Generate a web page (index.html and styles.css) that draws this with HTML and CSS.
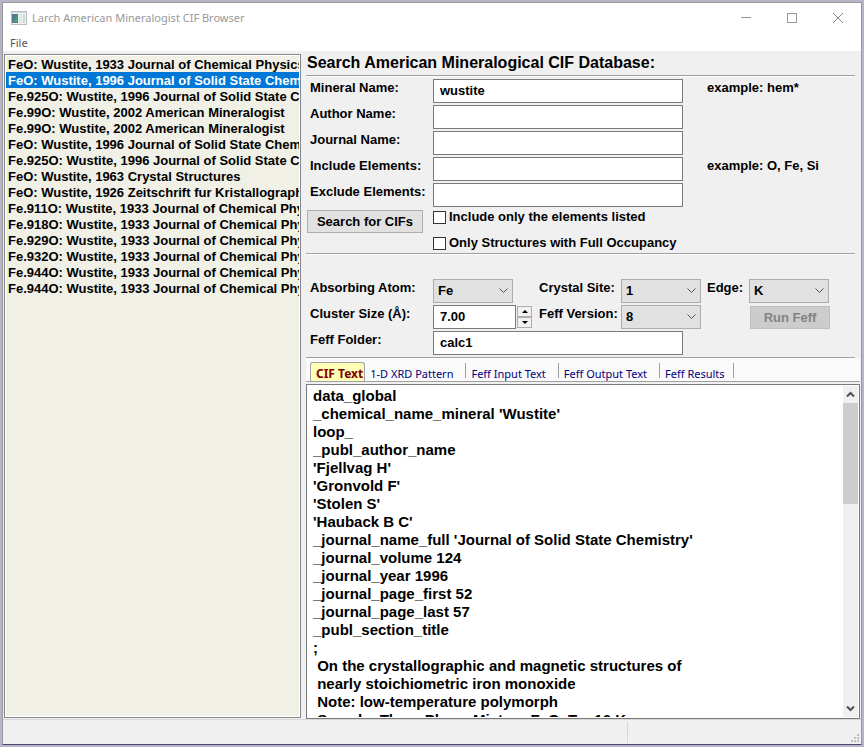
FILE: index.html
```html
<!DOCTYPE html>
<html lang="en">
<head>
<meta charset="utf-8">
<title>Larch American Mineralogist CIF Browser</title>
<link rel="stylesheet" href="styles.css">
</head>
<body>
<div class="window">
  <header class="titlebar">
    <svg class="app-icon" width="16" height="14" viewBox="0 0 16 14" aria-hidden="true">
      <defs><linearGradient id="pane" x1="0" y1="0" x2="1" y2="1"><stop offset="0" stop-color="#4766a0"/><stop offset="1" stop-color="#4fb27a"/></linearGradient></defs>
      <rect x="0.5" y="0.5" width="15" height="13" fill="#f1f3f4" stroke="#b9bdc0"/>
      <rect x="1" y="1" width="14" height="1" fill="#d2d8dc"/>
      <rect x="1" y="3" width="6" height="9" fill="#5d7a80"/>
      <rect x="2" y="4" width="4" height="7" fill="url(#pane)"/>
      <rect x="8" y="3" width="3" height="9" fill="#dde6ea"/>
      <rect x="12" y="3" width="2" height="9" fill="#c6dccf"/>
    </svg>
    <h1 class="title">Larch American Mineralogist CIF Browser</h1>
    <button class="caption" type="button" aria-label="Minimize"><svg width="10" height="10"><path d="M0 4.5H10" stroke="#999"/></svg></button>
    <button class="caption" type="button" aria-label="Maximize"><svg width="10" height="10"><rect x="0.5" y="0.5" width="9" height="9" fill="none" stroke="#999"/></svg></button>
    <button class="caption" type="button" aria-label="Close"><svg width="10" height="10"><path d="M0 0L10 10M10 0L0 10" stroke="#888"/></svg></button>
  </header>
  <nav class="menubar"><button class="menu" type="button">File</button></nav>

  <main class="content">
    <ul class="results">
      <li>FeO: Wustite, 1933 Journal of Chemical Physics</li>
      <li class="selected">FeO: Wustite, 1996 Journal of Solid State Chemistry</li>
      <li>Fe.925O: Wustite, 1996 Journal of Solid State Chemistry</li>
      <li>Fe.99O: Wustite, 2002 American Mineralogist</li>
      <li>Fe.99O: Wustite, 2002 American Mineralogist</li>
      <li>FeO: Wustite, 1996 Journal of Solid State Chemistry</li>
      <li>Fe.925O: Wustite, 1996 Journal of Solid State Chemistry</li>
      <li>FeO: Wustite, 1963 Crystal Structures</li>
      <li>FeO: Wustite, 1926 Zeitschrift fur Kristallographie</li>
      <li>Fe.911O: Wustite, 1933 Journal of Chemical Physics</li>
      <li>Fe.918O: Wustite, 1933 Journal of Chemical Physics</li>
      <li>Fe.929O: Wustite, 1933 Journal of Chemical Physics</li>
      <li>Fe.932O: Wustite, 1933 Journal of Chemical Physics</li>
      <li>Fe.944O: Wustite, 1933 Journal of Chemical Physics</li>
      <li>Fe.944O: Wustite, 1933 Journal of Chemical Physics</li>
    </ul>

    <section class="panel">
      <h2 class="heading">Search American Mineralogical CIF Database:</h2>
      <hr class="rule">
      <form class="form search">
        <label for="mineral">Mineral Name:</label>
        <input class="field wide" id="mineral" type="text" value="wustite">
        <span class="hint">example: hem*</span>
        <label for="author">Author Name:</label>
        <input class="field wide" id="author" type="text">
        <label for="journal">Journal Name:</label>
        <input class="field wide" id="journal" type="text">
        <label for="include">Include Elements:</label>
        <input class="field wide" id="include" type="text">
        <span class="hint">example: O, Fe, Si</span>
        <label for="exclude">Exclude Elements:</label>
        <input class="field wide" id="exclude" type="text">
        <button class="button go" type="button">Search for CIFs</button>
        <label class="check"><input type="checkbox">Include only the elements listed</label>
        <label class="check"><input type="checkbox">Only Structures with Full Occupancy</label>
      </form>
      <hr class="rule">
      <form class="form feff">
        <label for="atom">Absorbing Atom:</label>
        <select class="combo" id="atom"><option>Fe</option></select>
        <label for="site">Crystal Site:</label>
        <select class="combo" id="site"><option>1</option></select>
        <label for="edge">Edge:</label>
        <select class="combo" id="edge"><option>K</option></select>
        <label for="size">Cluster Size (Å):</label>
        <div class="spin">
          <input class="field" id="size" type="text" value="7.00">
          <div class="steps">
            <button type="button" aria-label="Increase"><svg width="6" height="3"><path d="M0 3L3 0L6 3Z"/></svg></button>
            <button type="button" aria-label="Decrease"><svg width="6" height="3"><path d="M0 0L3 3L6 0Z"/></svg></button>
          </div>
        </div>
        <label for="version">Feff Version:</label>
        <select class="combo" id="version"><option>8</option></select>
        <button class="button run" type="button" disabled>Run Feff</button>
        <label for="folder">Feff Folder:</label>
        <input class="field wide" id="folder" type="text" value="calc1">
      </form>
      <hr class="rule">
      <div class="tabs" role="tablist">
        <button class="tab active" type="button" role="tab" aria-selected="true">CIF Text</button>
        <button class="tab" type="button" role="tab">1-D XRD Pattern</button>
        <button class="tab" type="button" role="tab">Feff Input Text</button>
        <button class="tab" type="button" role="tab">Feff Output Text</button>
        <button class="tab" type="button" role="tab">Feff Results</button>
      </div>
      <div class="viewer">
        <textarea class="cif" aria-label="CIF Text" readonly>data_global
_chemical_name_mineral 'Wustite'
loop_
_publ_author_name
'Fjellvag H'
'Gronvold F'
'Stolen S'
'Hauback B C'
_journal_name_full 'Journal of Solid State Chemistry'
_journal_volume 124
_journal_year 1996
_journal_page_first 52
_journal_page_last 57
_publ_section_title
;
 On the crystallographic and magnetic structures of
 nearly stoichiometric iron monoxide
 Note: low-temperature polymorph
 Sample: Three Phase Mixture FeO, T = 10 K</textarea>
        <div class="scrollbar" aria-hidden="true">
          <svg width="15" height="17"><path d="M4 10.500L7.500 7L11 10.500" fill="none" stroke="#505050" stroke-width="2"/></svg>
          <div class="track"><div class="thumb"></div></div>
          <svg width="15" height="17"><path d="M4 6.500L7.500 10L11 6.500" fill="none" stroke="#505050" stroke-width="2"/></svg>
        </div>
      </div>
    </section>
  </main>

  <footer class="statusbar">
    <span class="status-main"></span>
    <span class="status-side"></span>
    <svg class="grip" width="8" height="8" fill="#bfbfbf" aria-hidden="true"><path d="M6 0h2v2h-2zM3 3h2v2h-2zM6 3h2v2h-2zM0 6h2v2h-2zM3 6h2v2h-2zM6 6h2v2h-2z"/></svg>
  </footer>
</div>
</body>
</html>
```
FILE: styles.css
```css
* {
  box-sizing: border-box;
}

body {
  margin: 0;
  height: 100vh;
  padding: 2px;
  background: #b8b4c8;
  color: #000;
  font: bold 13px/16px "Liberation Sans", Arial, sans-serif;
}

button,
input,
select,
textarea {
  font: inherit;
  color: inherit;
  margin: 0;
}

.window {
  display: flex;
  flex-direction: column;
  height: 100%;
  border: 1px solid #999;
  border-bottom-color: #4a4a72;
  background: #f0f0f0;
}

.titlebar {
  display: flex;
  align-items: center;
  height: 29px;
  padding-left: 8px;
  background: #fff;
}

.title {
  flex: 1;
  margin: 0 0 0 5px;
  color: #999;
  font: 11px/16px "Noto Sans", "Open Sans", sans-serif;
}

.caption {
  display: grid;
  place-items: center;
  width: 46px;
  height: 28px;
  padding: 0;
  border: 0;
  background: none;
}

.menubar {
  height: 19px;
  padding: 3px 0 0 7px;
  background: #fff;
}

.menu {
  display: block;
  padding: 0;
  border: 0;
  background: none;
  color: #555;
  font: 11px/16px "Noto Sans", "Open Sans", sans-serif;
}

.content {
  flex: 1;
  display: flex;
  gap: 5px;
  min-height: 0;
  padding: 0 1px;
}

.results {
  width: 297px;
  margin: 3px 0 1px;
  padding: 0;
  overflow: hidden;
  border: 1px solid #828790;
  outline: 1px solid #fff;
  outline-offset: -2px;
  background: #f0f0e6;
  list-style: none;
  white-space: nowrap;
}

.results li {
  margin: 0 1px;
  padding: 2px 0 0 2px;
  overflow: hidden;
  line-height: 14px;
}

.results li:first-child {
  margin-top: 1px;
}

.results .selected {
  background: #0078d7;
  color: #fff;
}

.panel {
  flex: 1;
  display: flex;
  flex-direction: column;
  min-width: 0;
}

.heading {
  margin: 0;
  padding: 2px 1px 3px;
  font-size: 16px;
  line-height: 19px;
}

.rule {
  width: calc(100% - 5px);
  height: 2px;
  margin: 0;
  border: 0;
  border-top: 1px solid #a0a0a0;
  border-bottom: 1px solid #fff;
}

.form {
  display: grid;
  grid-template-columns: 123px 106px 82px 86px 42px 80px;
  grid-auto-rows: 24px;
  row-gap: 2px;
  padding: 2px 4px;
}

.search {
  padding-bottom: 0;
  grid-template-rows: repeat(5, 24px) 24px 18px;
}

.feff {
  padding-top: 24px;
}

.form label {
  grid-column-start: 1;
  padding-top: 1px;
}

.form select + label {
  grid-column-start: auto;
}

.form label[for="version"] {
  grid-column-start: 3;
}

.field {
  min-width: 0;
  padding: 0 6px;
  border: 1px solid #7a7a7a;
  border-radius: 0;
  background: #fff;
}

.wide {
  grid-column: 2 / span 3;
  margin-right: 24px;
}

.hint {
  grid-column: 5 / span 2;
  padding-top: 1px;
}

.button {
  height: 23px;
  padding: 0;
  border: 1px solid #adadad;
  background: #e1e1e1;
}

.go {
  grid-column: 1;
  margin: 1px 10px 0 -3px;
}

.run {
  grid-column: 6;
  margin: 1px -1px 0 1px;
  border-color: #bfbfbf;
  background: #ccc;
  color: #838383;
}

.form .check {
  grid-column: 2 / -1;
  display: flex;
  align-items: center;
  gap: 3px;
  height: 16px;
  padding-top: 0;
}

.check input {
  appearance: none;
  width: 13px;
  height: 13px;
  border: 1px solid #333;
  background: #fff;
}

.combo {
  appearance: none;
  width: 80px;
  padding: 0 4px;
  border: 1px solid #adadad;
  border-radius: 0;
  background: #e1e1e1 url("data:image/svg+xml,%3Csvg xmlns='http://www.w3.org/2000/svg' width='9' height='6'%3E%3Cpath d='M0.500 0.500L4.500 4.500L8.500 0.500' fill='none' stroke='%23555'/%3E%3C/svg%3E") right 4px center no-repeat;
}

.spin {
  display: flex;
  gap: 1px;
}

.spin .field {
  width: 83px;
}

.steps {
  display: grid;
  grid-template-rows: 11px 11px;
  width: 15px;
  padding-top: 1px;
}

.steps button {
  display: grid;
  place-items: center;
  padding: 0;
  border: 1px solid #adadad;
  background: #f0f0f0;
}

.tabs {
  display: flex;
  align-items: flex-end;
  height: 23px;
  padding-left: 4px;
  border-bottom: 1px solid #a0a0a0;
  background: #fafafa;
}

.tab {
  height: 18px;
  padding: 4px 13px 0 5px;
  border: 0;
  background: linear-gradient(#a0a0a0, #a0a0a0) right top / 1px 15px no-repeat;
  color: #000080;
  font: 11px/14px "Noto Sans", "Open Sans", sans-serif;
  white-space: nowrap;
}

.tab:last-child {
  padding-right: 9px;
}

.tab.active {
  height: 19px;
  padding: 4px 1px 0 5px;
  border: 1px solid #a0a0a0;
  border-bottom: 0;
  border-radius: 3px 3px 0 0;
  background: #ffffb8;
  color: #800000;
  font-size: 12px;
  font-weight: bold;
}

.viewer {
  flex: 1;
  display: flex;
  min-height: 0;
  margin-top: 2px;
  padding: 1px;
  border: 1px solid #7a7a7a;
  background: #fff;
}

.cif {
  flex: 1;
  padding: 1px 5px 0;
  border: 0;
  outline: 0;
  overflow: hidden;
  resize: none;
  background: #fff;
  font-size: 15px;
  line-height: 18px;
  white-space: pre;
}

.scrollbar {
  display: flex;
  flex-direction: column;
  width: 15px;
  background: #f0f0f0;
}

.track {
  flex: 1;
}

.thumb {
  height: 34%;
  background: #cdcdcd;
}

.statusbar {
  display: flex;
  align-items: flex-end;
  height: 25px;
  padding-right: 2px;
  border-top: 1px solid #d7d7d7;
}

.status-main {
  flex: 1;
  align-self: stretch;
  margin: 2px 0 1px;
  border-right: 1px solid #d7d7d7;
}

.status-side {
  width: 223px;
}

.grip {
  margin-bottom: 2px;
}
```
